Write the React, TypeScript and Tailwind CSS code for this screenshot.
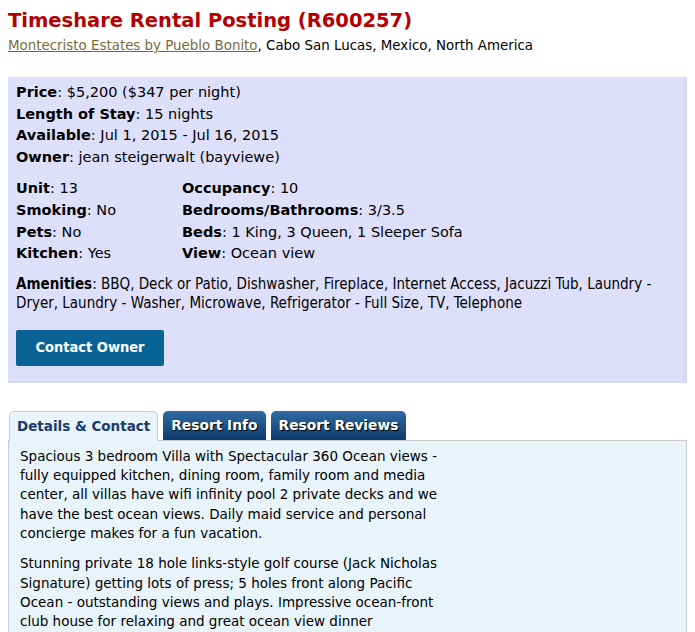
import React from "react";

const details = [
  { label: "Price", value: "$5,200 ($347 per night)" },
  { label: "Length of Stay", value: "15 nights" },
  { label: "Available", value: "Jul 1, 2015 - Jul 16, 2015" },
  { label: "Owner", value: "jean steigerwalt (bayviewe)" },
];

const specsLeft = [
  { label: "Unit", value: "13" },
  { label: "Smoking", value: "No" },
  { label: "Pets", value: "No" },
  { label: "Kitchen", value: "Yes" },
];

const specsRight = [
  { label: "Occupancy", value: "10" },
  { label: "Bedrooms/Bathrooms", value: "3/3.5" },
  { label: "Beds", value: "1 King, 3 Queen, 1 Sleeper Sofa" },
  { label: "View", value: "Ocean view" },
];

function Field({ label, value }: { label: string; value: string }) {
  return (
    <div>
      <span className="font-bold">{label}</span>: {value}
    </div>
  );
}

export default function App() {
  return (
    <div className="min-h-[632px] bg-white px-2 pt-[7px] font-['DejaVu_Sans',Verdana,sans-serif] text-black">
      <h1 className="text-[19.5px] leading-[28px] font-bold text-[#b30000]">
        Timeshare Rental Posting (R600257)
      </h1>
      <div className="text-[13.4px] leading-[22px]">
        <a href="#" className="text-[#7a6a3a] underline">
          Montecristo Estates by Pueblo Bonito
        </a>
        , Cabo San Lucas, Mexico, North America
      </div>

      <div className="mt-[20px] border-r-4 border-b-2 border-[#d6d9f5] bg-[#dee0fb] px-2 pt-[5px] pb-[15px]">
        <div className="text-[14.5px] leading-[21.6px]">
          {details.map((d) => (
            <Field key={d.label} {...d} />
          ))}
        </div>
        <div className="mt-[10px] grid grid-cols-[166px_1fr] text-[14.5px] leading-[21.6px]">
          <div>
            {specsLeft.map((d) => (
              <Field key={d.label} {...d} />
            ))}
          </div>
          <div>
            {specsRight.map((d) => (
              <Field key={d.label} {...d} />
            ))}
          </div>
        </div>
        <div className="mt-[10px] font-['DejaVu_Sans_Condensed','DejaVu_Sans',sans-serif] text-[15px] leading-[19px]">
          <span className="font-bold">Amenities</span>: BBQ, Deck or Patio, Dishwasher, Fireplace, Internet
          Access, Jacuzzi Tub, Laundry - Dryer, Laundry - Washer, Microwave, Refrigerator - Full Size, TV,
          Telephone
        </div>
        <button className="mt-[17px] h-[36px] w-[148px] rounded-[2px] bg-[#0a6396] font-['DejaVu_Sans_Condensed','DejaVu_Sans',sans-serif] text-[14.5px] font-bold text-white">
          Contact Owner
        </button>
      </div>

      <div className="mt-[28px] flex items-end gap-[5px] pl-[1px]">
        <div className="relative z-10 -mb-px flex h-[30px] items-center rounded-t-[5px] border border-b-0 border-[#c9c9c9] bg-[#e8f4fa] px-[7px] text-[13.5px] font-bold text-[#1b3a6b]">
          Details &amp; Contact
        </div>
        <div className="flex h-[29px] items-center rounded-t-[5px] bg-gradient-to-b from-[#2f6ba3] to-[#0d3c6e] px-[8px] text-[13.8px] font-bold text-white [text-shadow:1px_1px_1px_#000]">
          Resort Info
        </div>
        <div className="flex h-[29px] items-center rounded-t-[5px] bg-gradient-to-b from-[#2f6ba3] to-[#0d3c6e] px-[8px] text-[13.8px] font-bold text-white [text-shadow:1px_1px_1px_#000]">
          Resort Reviews
        </div>
      </div>
      <div className="border border-[#c9c9c9] border-b-0 bg-[#e8f4fa] px-[11px] pt-[6px] pb-4">
        <div className="w-[428px] text-[13.5px] leading-[19.3px]">
          <p>
            Spacious 3 bedroom Villa with Spectacular 360 Ocean views - fully equipped kitchen, dining room,
            family room and media center, all villas have wifi infinity pool 2 private decks and we have the
            best ocean views. Daily maid service and personal concierge makes for a fun vacation.
          </p>
          <p className="mt-[11px]">
            Stunning private 18 hole links-style golf course (Jack Nicholas Signature) getting lots of press;
            5 holes front along Pacific Ocean - outstanding views and plays. Impressive ocean-front club house
            for relaxing and great ocean view dinner
          </p>
        </div>
      </div>
    </div>
  );
}
